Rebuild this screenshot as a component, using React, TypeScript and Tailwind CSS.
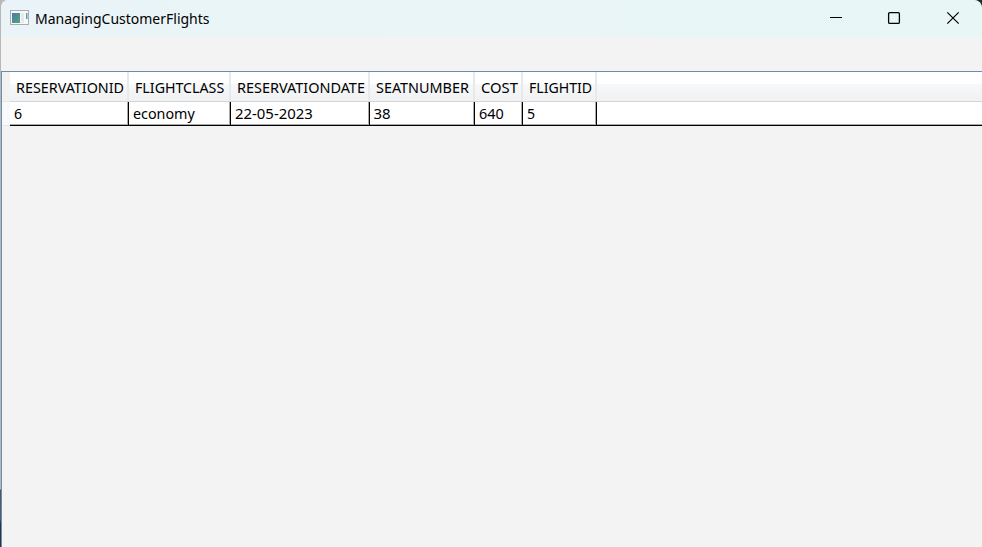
import { useLayoutEffect, useRef } from 'react';

function Label({ text, width, className = '' }: { text: string; width: number; className?: string }) {
  const ref = useRef<HTMLSpanElement>(null);
  useLayoutEffect(() => {
    const el = ref.current;
    if (el) el.style.transform = `scaleX(${width / el.offsetWidth})`;
  }, [text, width]);
  return (
    <span ref={ref} className={`inline-block origin-left whitespace-nowrap ${className}`}>
      {text}
    </span>
  );
}

const columns = [
  { name: 'RESERVATIONID', nameWidth: 108, value: '6', valueWidth: 8.5, cell: 'w-[119px]' },
  { name: 'FLIGHTCLASS', nameWidth: 89, value: 'economy', valueWidth: 62, cell: 'w-[102px]' },
  { name: 'RESERVATIONDATE', nameWidth: 128, value: '22-05-2023', valueWidth: 77.5, cell: 'w-[139px]' },
  { name: 'SEATNUMBER', nameWidth: 93, value: '38', valueWidth: 17, cell: 'w-[105px]' },
  { name: 'COST', nameWidth: 36.5, value: '640', valueWidth: 25, cell: 'w-[48px]' },
  { name: 'FLIGHTID', nameWidth: 63, value: '5', valueWidth: 8.5, cell: 'w-[74px]' },
];

function TitleBar() {
  return (
    <header className="flex h-[37px] shrink-0 items-center bg-linear-to-r from-[#eaf4f8] to-[#e8f6f6]">
      <svg width="19" height="16" viewBox="0 0 19 16" className="-mt-px ml-[9px] shrink-0">
        <defs>
          <linearGradient id="pane" x1="0" y1="0" x2="1" y2="1">
            <stop offset="0" stopColor="#4779ae" />
            <stop offset="1" stopColor="#55a578" />
          </linearGradient>
        </defs>
        <rect x="0.5" y="0.5" width="18" height="14" fill="#f7f8f8" stroke="#a9adb3" />
        <rect x="2" y="3" width="8" height="10" fill="url(#pane)" />
        <path d="M11 3h3v10h-3z" fill="#e7eaec" />
        <rect x="16" y="3" width="1.5" height="6" fill="#5c9daa" />
      </svg>
      <div className="-mt-px ml-[6px] grow text-[15px] leading-5">
        <Label text="ManagingCustomerFlights" width={174.5} />
      </div>
      <svg width="130" height="14" viewBox="0 0 130 14" fill="none" stroke="#000" className="-mt-px mr-[22px] shrink-0">
        <path d="M0 6.5h12" />
        <rect x="58.6" y="1.6" width="10.8" height="10.8" rx="1.2" strokeWidth="1.3" />
        <path d="m117.3 1.3 11.4 11.4m0-11.4-11.4 11.4" strokeWidth="1.2" />
      </svg>
    </header>
  );
}

export default function App() {
  return (
    <div className="h-[547px] w-[982px] overflow-hidden bg-[linear-gradient(to_right,#bdbdbd_50%,#24282d_50%)]">
      <div className="h-full bg-[linear-gradient(to_bottom,#b8b8b8_489px,#5c4f55_490px,#50616d_518px,#303338_524px)] bg-[length:2px_100%] bg-no-repeat font-['Noto_Sans','Open_Sans',sans-serif] text-black">
        <div className="flex h-full flex-col overflow-hidden rounded-t-[8px] border-l border-transparent bg-[#f3f3f3] bg-clip-padding">
          <TitleBar />
          <div className="h-[34px] shrink-0" />
          <main className="grow border-t border-l border-[#6b8eb0]">
            <div className="flex h-[30px]">
              <div className="w-2 shrink-0 border-b border-[#e7e8ea] bg-[#f2f2f3]" />
              <div className="flex grow border-b border-[#d5d5d5] bg-linear-to-b from-white from-40% via-[#f7f8fa] via-41% to-[#f0f1f3] text-[15px] leading-[30px]">
                {columns.map((c) => (
                  <div key={c.name} className={`${c.cell} shrink-0 border-r-2 border-[#e7e9eb] pl-[6px]`}>
                    <Label text={c.name} width={c.nameWidth} />
                  </div>
                ))}
              </div>
            </div>
            <div className="flex h-6">
              <div className="w-2 shrink-0 border-b border-[#e7e8ea] bg-[#f8f9fa]" />
              <div className="flex grow border-b border-black bg-white text-[15px] leading-[23px] shadow-[inset_0_-1px_#aaa]">
                {columns.map((c) => (
                  <div key={c.name} className={`${c.cell} shrink-0 border-r border-black pl-[3.5px] shadow-[inset_-1px_-1px_#aaa]`}>
                    <Label text={c.value} width={c.valueWidth} />
                  </div>
                ))}
              </div>
            </div>
          </main>
        </div>
      </div>
    </div>
  );
}
